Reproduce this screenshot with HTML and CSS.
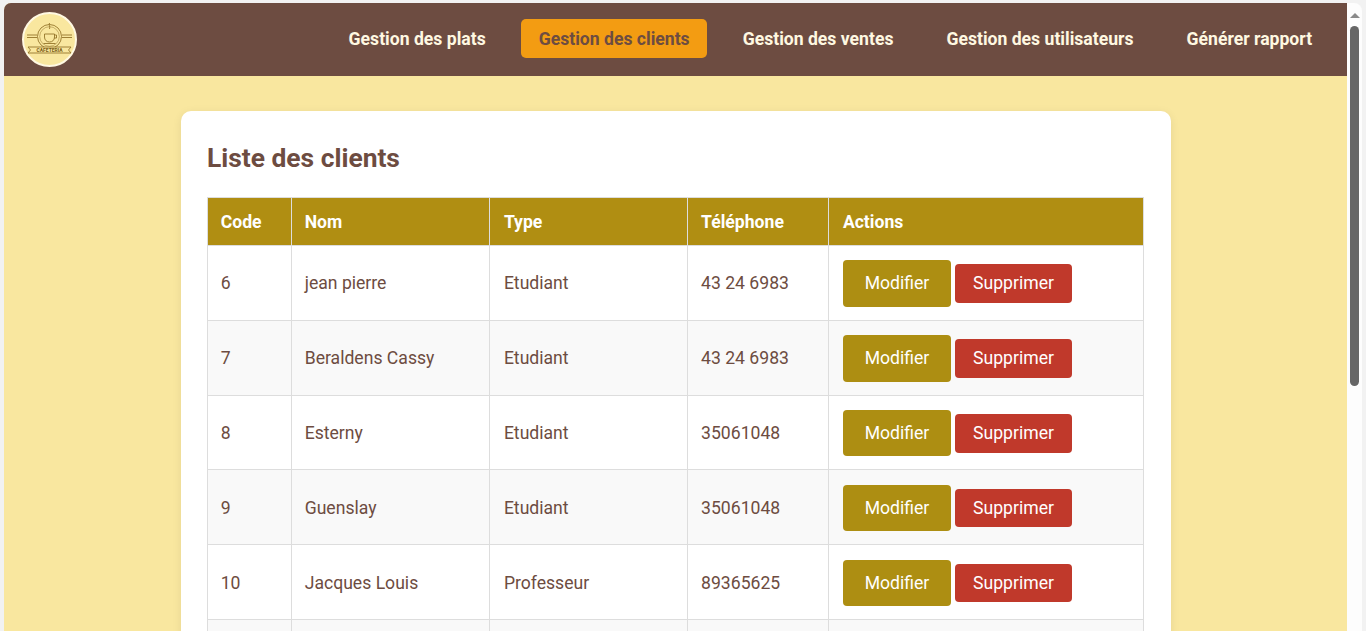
FILE: index.html
```html
<!DOCTYPE html>
<html>
	<head>
		<meta charset="utf-8">
		<title>Gestion des clients</title>
		<link rel="stylesheet" href="styles.css">
	</head>
	<body>
		<div class="window">
			<div class="page">
				<header class="topbar">
					<div class="logo">
						<svg viewBox="0 0 51 51" width="51" height="51">
							<g fill="none" stroke="#94752a" stroke-width="0.9">
								<circle cx="25.500" cy="22.500" r="12"/>
								<circle cx="25.500" cy="22.500" r="9.800" stroke-width="0.5"/>
								<path d="M20.500 20h10v3c0 3-2 5-5 5s-5-2-5-5z"/>
								<path d="M30.500 21h2v3h-2.500"/>
								<path d="M19.500 29.500h12"/>
								<path d="M25.500 9c-1 2 1 3 0 6"/>
								<path d="M3 21h10M3 23.500h10M38 21h10M38 23.500h10"/>
								<path d="M4 33h43l-2.500 3 2.500 3H4l2.500-3z" fill="#f9e79f"/>
							</g>
							<text class="logo-text" x="25.500" y="38" text-anchor="middle">CAFETERIA</text>
						</svg>
					</div>
					<nav class="menu">
						<a href="#">Gestion des plats</a>
						<a href="#" class="current">Gestion des clients</a>
						<a href="#">Gestion des ventes</a>
						<a href="#">Gestion des utilisateurs</a>
						<a href="#">Générer rapport</a>
					</nav>
				</header>

				<main class="card">
					<h2>Liste des clients</h2>
					<table>
						<thead>
							<tr>
								<th class="col-code">Code</th>
								<th class="col-nom">Nom</th>
								<th class="col-type">Type</th>
								<th class="col-tel">Téléphone</th>
								<th class="col-actions">Actions</th>
							</tr>
						</thead>
						<tbody>
							<tr>
								<td>6</td>
								<td>jean pierre</td>
								<td class="col-type">Etudiant</td>
								<td>43 24 6983</td>
								<td class="col-actions"><a href="#" class="btn-edit">Modifier</a> <a href="#" class="btn-delete">Supprimer</a></td>
							</tr>
							<tr>
								<td>7</td>
								<td>Beraldens Cassy</td>
								<td class="col-type">Etudiant</td>
								<td>43 24 6983</td>
								<td class="col-actions"><a href="#" class="btn-edit">Modifier</a> <a href="#" class="btn-delete">Supprimer</a></td>
							</tr>
							<tr>
								<td>8</td>
								<td>Esterny</td>
								<td class="col-type">Etudiant</td>
								<td>35061048</td>
								<td class="col-actions"><a href="#" class="btn-edit">Modifier</a> <a href="#" class="btn-delete">Supprimer</a></td>
							</tr>
							<tr>
								<td>9</td>
								<td>Guenslay</td>
								<td class="col-type">Etudiant</td>
								<td>35061048</td>
								<td class="col-actions"><a href="#" class="btn-edit">Modifier</a> <a href="#" class="btn-delete">Supprimer</a></td>
							</tr>
							<tr>
								<td>10</td>
								<td>Jacques Louis</td>
								<td class="col-type">Professeur</td>
								<td>89365625</td>
								<td class="col-actions"><a href="#" class="btn-edit">Modifier</a> <a href="#" class="btn-delete">Supprimer</a></td>
							</tr>
							<tr>
								<td>&nbsp;</td>
								<td>&nbsp;</td>
								<td>&nbsp;</td>
								<td>&nbsp;</td>
								<td>&nbsp;</td>
							</tr>
						</tbody>
					</table>
				</main>
			</div>

			<div class="scrollbar">
				<div class="arrow"></div>
				<div class="thumb"></div>
			</div>
		</div>
	</body>
</html>
```

FILE: styles.css
```css
* {
	margin: 0;
	padding: 0;
	box-sizing: border-box;
}

html,
body {
	height: 100%;
	overflow: hidden;
}

body {
	background-color: #f2f2f2;
	font-family: Roboto, "Liberation Sans", sans-serif;
	color: #6d4c41;
}

a {
	text-decoration: none;
}

.window {
	display: flex;
	height: 100%;
	padding: 3px 4px 0 4px;
}

.page {
	flex: 1;
	min-width: 0;
	overflow: hidden;
	background-color: #f9e79f;
	border-top-left-radius: 7px;
}

/* barre du haut */
.topbar {
	display: flex;
	align-items: center;
	justify-content: space-between;
	height: 73px;
	padding: 0 17.3px 0 18px;
	background-color: #6d4c41;
}

.logo {
	width: 55px;
	height: 55px;
	border: 2px solid #fff8e1;
	border-radius: 50%;
	background-color: #f9e79f;
}

.logo svg {
	display: block;
}

.logo-text {
	font-size: 5px;
	font-weight: 700;
	fill: #7a5c14;
	stroke: none;
}

.menu {
	display: flex;
	gap: 17.8px;
	margin-bottom: 2px;
}

.menu a {
	padding: 9.600px 17.6px;
	border-radius: 5px;
	font-size: 17.6px;
	font-weight: 700;
	color: #fff8e1;
}

.menu a.current {
	background-color: #f39c12;
	color: #6d4c41;
}

/* carte */
.card {
	width: 990px;
	margin: 35px auto 0;
	padding: 32px 26.4px 27px;
	border-radius: 10px;
	background-color: #fff;
	box-shadow: 0 2px 10px rgba(0, 0, 0, 0.08);
}

.card h2 {
	margin-bottom: 24.3px;
	font-size: 26.4px;
	font-weight: 700;
}

table {
	width: 100%;
	border-collapse: collapse;
	font-size: 17.6px;
}

th,
td {
	padding: 14.4px 12.8px 13.1px;
	border: 1px solid #ddd;
	text-align: left;
}

th {
	padding: 14px 12.8px 12.6px;
	background-color: #b08e12;
	color: #fff;
	font-weight: 700;
}

th.col-type,
td.col-type,
th.col-actions,
td.col-actions {
	padding-left: 13.6px;
}

tbody tr:nth-child(even) {
	background-color: #f9f9f9;
}

.col-code {
	width: 84px;
}

.col-nom {
	width: 198.4px;
}

th.col-type {
	width: 198px;
}

.col-tel {
	width: 141px;
}

.btn-edit,
.btn-delete {
	display: inline-block;
	border-radius: 4px;
	color: #fff;
}

.btn-edit {
	padding: 13.2px 21.8px;
	background-color: #ad8e12;
}

.btn-delete {
	padding: 9.400px 17.6px;
	background-color: #c0392b;
}

/* barre de defilement */
.scrollbar {
	flex: none;
	width: 15px;
	padding-top: 10px;
	border-top-right-radius: 8px;
	background-color: #fdfdfd;
}

.arrow {
	width: 0;
	margin: 0 auto;
	border-left: 5px solid transparent;
	border-right: 5px solid transparent;
	border-bottom: 5px solid #8a8a8a;
}

.thumb {
	width: 9px;
	height: 360px;
	margin: 8px auto 0;
	border-radius: 5px;
	background-color: #666;
}
```
